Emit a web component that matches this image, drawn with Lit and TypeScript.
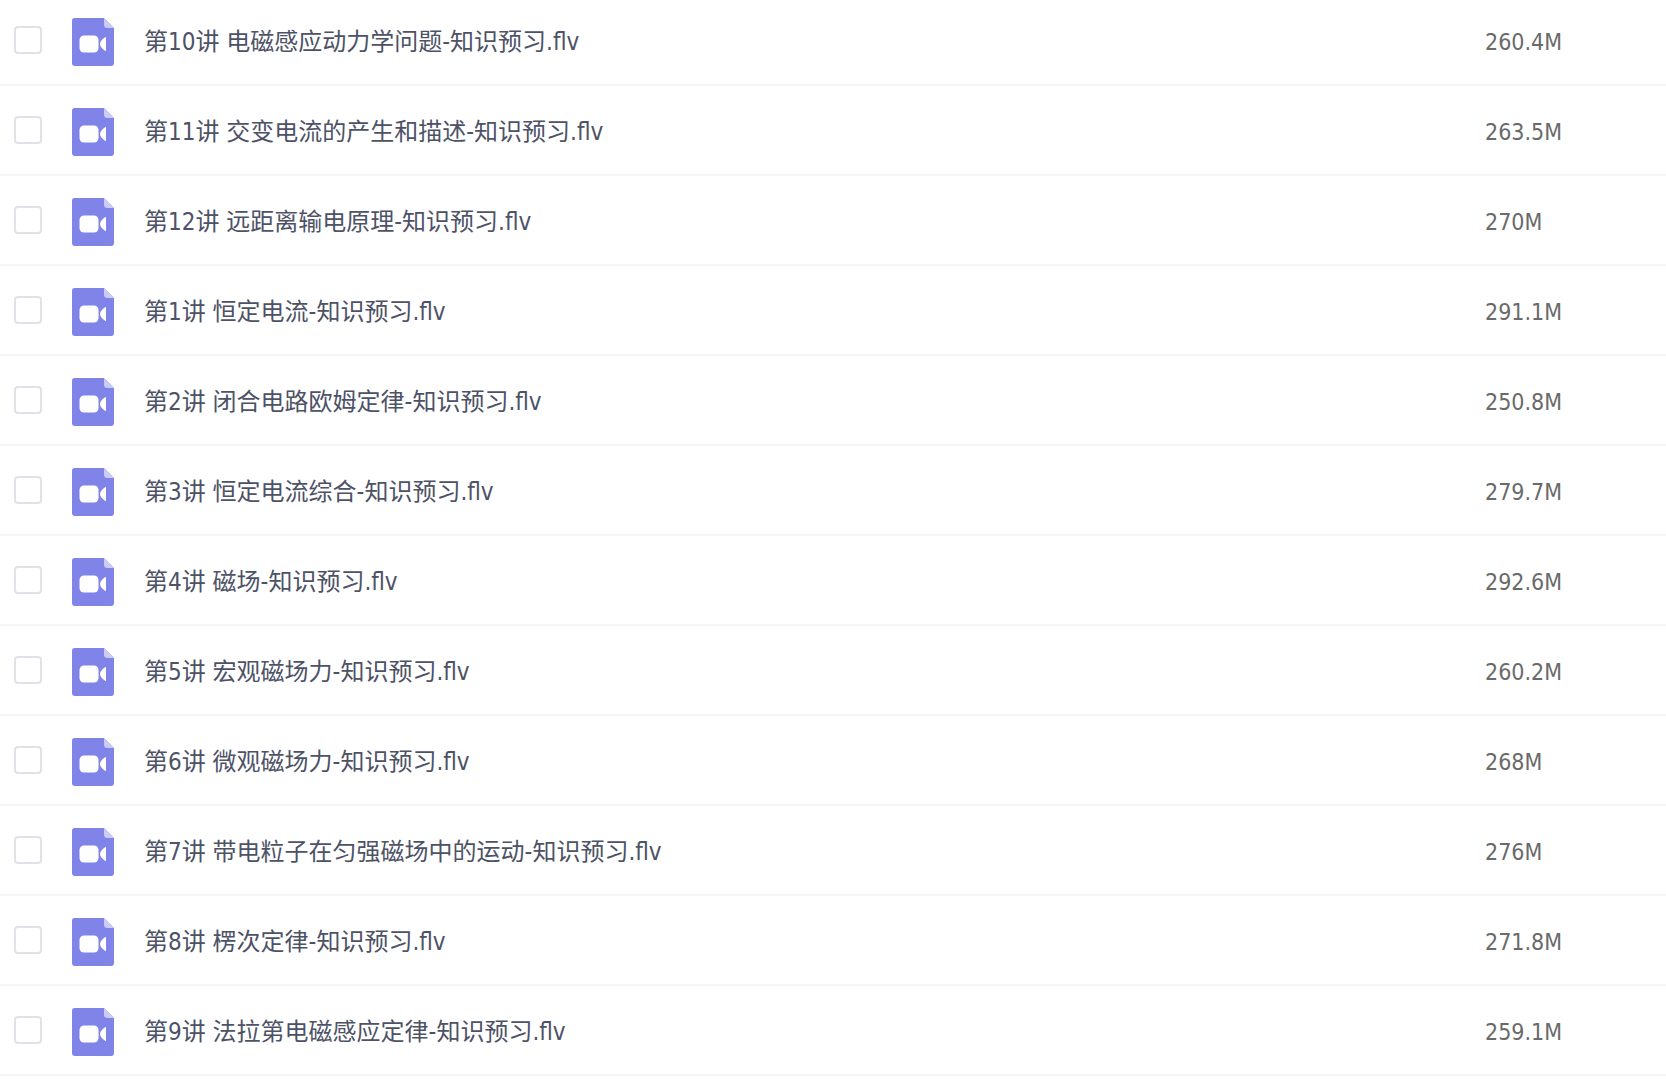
import { LitElement, html, css } from "lit";
import { customElement, state } from "lit/decorators.js";

interface VideoFile {
  name: string;
  size: string;
}

const FILES: VideoFile[] = [
  { name: "第10讲 电磁感应动力学问题-知识预习.flv", size: "260.4M" },
  { name: "第11讲 交变电流的产生和描述-知识预习.flv", size: "263.5M" },
  { name: "第12讲 远距离输电原理-知识预习.flv", size: "270M" },
  { name: "第1讲 恒定电流-知识预习.flv", size: "291.1M" },
  { name: "第2讲 闭合电路欧姆定律-知识预习.flv", size: "250.8M" },
  { name: "第3讲 恒定电流综合-知识预习.flv", size: "279.7M" },
  { name: "第4讲 磁场-知识预习.flv", size: "292.6M" },
  { name: "第5讲 宏观磁场力-知识预习.flv", size: "260.2M" },
  { name: "第6讲 微观磁场力-知识预习.flv", size: "268M" },
  { name: "第7讲 带电粒子在匀强磁场中的运动-知识预习.flv", size: "276M" },
  { name: "第8讲 楞次定律-知识预习.flv", size: "271.8M" },
  { name: "第9讲 法拉第电磁感应定律-知识预习.flv", size: "259.1M" },
];

@customElement("video-icon")
export class VideoIcon extends LitElement {
  static styles = css`
    :host {
      display: block;
    }
    .icon {
      display: block;
      width: 42px;
      height: 48px;
    }
  `;

  render() {
    return html`
      <svg class="icon" viewBox="0 0 42 48" aria-hidden="true">
        <path
          d="M2.500 0H32L42 10V45Q42 48 39 48H3Q0 48 0 45V2.500Q0 0 2.500 0Z"
          fill="#8084e8"
        />
        <path d="M32 0L42 10H35.500Q32 10 32 6.500Z" fill="#cbccf6" />
        <rect x="7.500" y="17.500" width="19" height="17" rx="4.500" fill="#fff" />
        <path
          d="M34 19.500V32.500Q34 33.500 33 32.800Q28 29 28 26Q28 23 33 19.200Q34 18.500 34 19.500Z"
          fill="#fff"
        />
      </svg>
    `;
  }
}

@customElement("app-root")
export class AppRoot extends LitElement {
  static styles = css`
    :host {
      display: block;
      overflow: hidden;
      background: #fff;
      font-family: "DejaVu Sans Condensed", "Noto Sans CJK SC", sans-serif;
    }
    .files {
      width: 100%;
      margin-top: -4px;
      border-collapse: separate;
      border-spacing: 0;
      table-layout: fixed;
    }
    .cell {
      padding: 22px 0 18px;
      border-bottom: 2px solid #f3f5f9;
      text-align: left;
      vertical-align: middle;
      font-weight: 400;
      line-height: 48px;
      white-space: nowrap;
    }
    .pick {
      width: 72px;
    }
    .kind {
      width: 72px;
    }
    .name {
      overflow: hidden;
      text-overflow: ellipsis;
      color: #4d5266;
      font-size: 24px;
    }
    .size {
      width: 181px;
      color: #6a6a6a;
      font-size: 23px;
    }
    .label {
      cursor: pointer;
    }
    .box {
      display: block;
      appearance: none;
      box-sizing: border-box;
      width: 28px;
      height: 28px;
      margin: 0 0 4px 14px;
      border: 2px solid #e1e1e8;
      border-radius: 4px;
      background: #fff;
      cursor: pointer;
    }
    .box:checked {
      border-color: #8084e8;
      background: #8084e8;
    }
  `;

  @state() private picked = new Set<number>();

  private toggle(index: number) {
    const next = new Set(this.picked);
    if (!next.delete(index)) next.add(index);
    this.picked = next;
  }

  render() {
    return html`
      <table class="files">
        <tbody>
          ${FILES.map(
            (file, i) => html`
              <tr>
                <td class="cell pick">
                  <input
                    class="box"
                    type="checkbox"
                    id="file-${i}"
                    .checked=${this.picked.has(i)}
                    @change=${() => this.toggle(i)}
                  />
                </td>
                <td class="cell kind"><video-icon></video-icon></td>
                <th class="cell name" scope="row">
                  <label class="label" for="file-${i}">${file.name}</label>
                </th>
                <td class="cell size">${file.size}</td>
              </tr>
            `
          )}
        </tbody>
      </table>
    `;
  }
}
